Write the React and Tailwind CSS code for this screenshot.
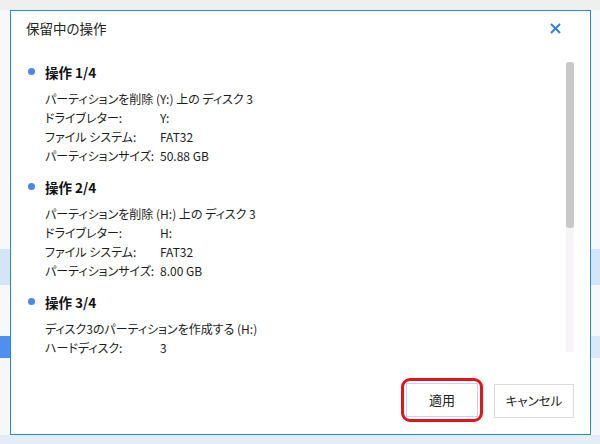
import React from "react";

const sections = [
  {
    title: "1/4",
    desc: "パーティションを削除 (Y:) 上の ディスク 3",
    rows: [
      ["ドライブレター:", "Y:"],
      ["ファイル システム:", "FAT32"],
      ["パーティションサイズ:", "50.88 GB"],
    ],
  },
  {
    title: "2/4",
    desc: "パーティションを削除 (H:) 上の ディスク 3",
    rows: [
      ["ドライブレター:", "H:"],
      ["ファイル システム:", "FAT32"],
      ["パーティションサイズ:", "8.00 GB"],
    ],
  },
  {
    title: "3/4",
    desc: "ディスク3のパーティションを作成する (H:)",
    rows: [["ハードディスク:", "3"]],
  },
];

function Section({ s }) {
  return (
    <div className="mb-[12.5px]">
      <div className="flex items-center h-[20px]">
        <span className="w-[7px] h-[7px] rounded-full bg-[#4a86f0] ml-[2px] mr-[10px] -mt-[2px]" />
        <span className="text-[13.5px] font-bold text-[#111]">操作 {s.title}</span>
      </div>
      <div className="pl-[19px] mt-[6.5px]">
        <div className="h-[19px] leading-[19px] whitespace-nowrap">{s.desc}</div>
        {s.rows.map(([k, v]) => (
          <div key={k} className="flex h-[19px] leading-[19px] whitespace-nowrap">
            <span className="w-[115px] shrink-0">{k}</span>
            <span>{v}</span>
          </div>
        ))}
      </div>
    </div>
  );
}

export default function App() {
  return (
    <div
      className="relative w-[600px] h-[444px] overflow-hidden bg-[#f4f5f5] text-[#1c1c1c] [font-feature-settings:'palt']"
      style={{ fontFamily: '"Noto Sans CJK JP", "Liberation Sans", sans-serif' }}
    >
      {/* page behind the dialog */}
      <div className="flex flex-col h-full">
        <div className="h-[10px] bg-[#eef0ee]" />
        <div className="h-[239px] bg-[#f7f8f9]" />
        <div className="h-[36px] bg-[#d4e5f8]" />
        <div className="h-[51px] bg-[#f7f8f9]" />
        <div className="h-[22px] flex">
          <div className="w-[10px] bg-[#4f8ff0]" />
          <div className="flex-1 bg-[#dbe8f8]" />
        </div>
        <div className="flex-1 bg-[#f5f7f9]" />
        <div className="h-[9px] bg-[#e4edf7]" />
      </div>

      {/* dialog */}
      <div className="absolute left-[10px] top-[10px] w-[581px] h-[425px] bg-white border border-[#2389e3] flex flex-col">
        <div className="h-[34px] flex items-center justify-between pl-[15px] pr-[29px]">
          <span className="text-[13.5px] text-[#222]">保留中の操作</span>
          <svg width="11" height="11" viewBox="0 0 11 11" className="mt-[1px]">
            <path d="M1 1 L10 10 M10 1 L1 10" stroke="#2f7fe6" strokeWidth="2" />
          </svg>
        </div>

        <div className="mt-[17px] h-[294px] flex pl-[15px] pr-[16px]">
          <div className="flex-1 h-[294px] overflow-hidden text-[12px]">
            {sections.map((s) => (
              <Section key={s.title} s={s} />
            ))}
          </div>
          <div className="w-[8px] h-[290px] bg-[#f6f4f6]">
            <div className="h-[166px] rounded-[3px] bg-[#c9c9c9]" />
          </div>
        </div>

        <div className="flex-1 flex items-end justify-end gap-[11px] pr-[16px] pb-[12px]">
          <div className="border-[3px] border-[#e3141c] rounded-[9px] p-[2px]">
            <button className="w-[72px] h-[34px] border border-[#bcd6f6] bg-white text-[13px] text-[#222]">
              適用
            </button>
          </div>
          <button className="mb-[4px] w-[80px] h-[34px] border border-[#dcdcdc] bg-white text-[12.5px] text-[#222]">
            キャンセル
          </button>
        </div>
      </div>
    </div>
  );
}
